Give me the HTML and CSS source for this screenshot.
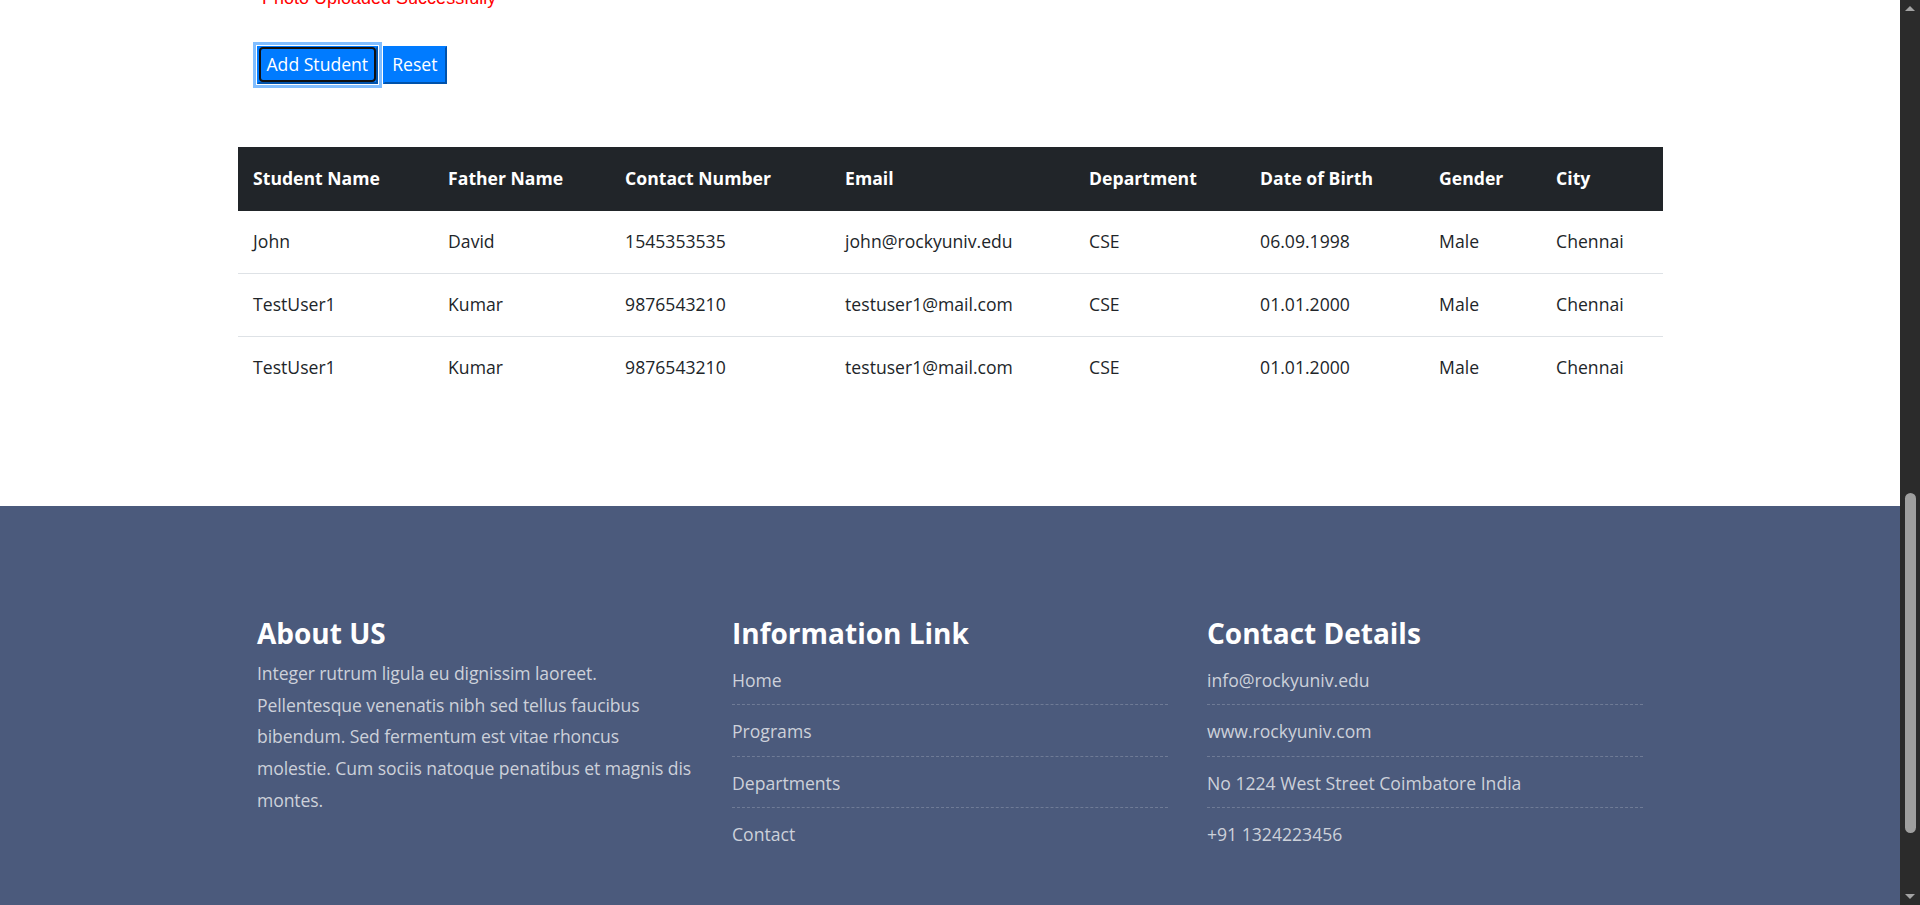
FILE: index.html
```html
<!DOCTYPE html>
<html lang="en">
<head>
<meta charset="utf-8">
<title>Rocky University - Student Registration</title>
<link rel="stylesheet" href="styles.css">
</head>
<body>
<div class="page">
  <main class="main">
    <div class="container">
      <form class="reg-form" onsubmit="return false;">
        <p class="upload-msg">&nbsp;Photo Uploaded Successfully</p>
        <div class="actions">
          <button type="submit" class="btn btn-focus">Add Student</button>
          <button type="reset" class="btn">Reset</button>
        </div>
      </form>

      <table class="students">
        <colgroup>
          <col class="c1"><col class="c2"><col class="c3"><col class="c4"><col class="c5"><col class="c6"><col class="c7"><col class="c8">
        </colgroup>
        <thead>
          <tr>
            <th>Student Name</th><th>Father Name</th><th>Contact Number</th><th>Email</th><th>Department</th><th>Date of Birth</th><th>Gender</th><th>City</th>
          </tr>
        </thead>
        <tbody>
          <tr>
            <td>John</td><td>David</td><td>1545353535</td><td>john@rockyuniv.edu</td><td>CSE</td><td>06.09.1998</td><td>Male</td><td>Chennai</td>
          </tr>
          <tr>
            <td>TestUser1</td><td>Kumar</td><td>9876543210</td><td>testuser1@mail.com</td><td>CSE</td><td>01.01.2000</td><td>Male</td><td>Chennai</td>
          </tr>
          <tr>
            <td>TestUser1</td><td>Kumar</td><td>9876543210</td><td>testuser1@mail.com</td><td>CSE</td><td>01.01.2000</td><td>Male</td><td>Chennai</td>
          </tr>
        </tbody>
      </table>
    </div>
  </main>

  <footer class="site-footer">
    <div class="container footer-grid">
      <div class="footer-col">
        <h3 class="footer-title">About US</h3>
        <p class="footer-text">Integer rutrum ligula eu dignissim laoreet. Pellentesque venenatis nibh sed tellus faucibus bibendum. Sed fermentum est vitae rhoncus molestie. Cum sociis natoque penatibus et magnis dis montes.</p>
      </div>
      <div class="footer-col">
        <h3 class="footer-title">Information Link</h3>
        <ul class="footer-list">
          <li><a href="#">Home</a></li>
          <li><a href="#">Programs</a></li>
          <li><a href="#">Departments</a></li>
          <li><a href="#">Contact</a></li>
        </ul>
      </div>
      <div class="footer-col">
        <h3 class="footer-title">Contact Details</h3>
        <ul class="footer-list">
          <li>info@rockyuniv.edu</li>
          <li>www.rockyuniv.com</li>
          <li>No 1224 West Street Coimbatore India</li>
          <li>+91 1324223456</li>
        </ul>
      </div>
    </div>
  </footer>
</div>

<div class="scrollbar" aria-hidden="true">
  <span class="sb-btn"><span class="sb-arrow sb-up"></span></span>
  <span class="sb-thumb"></span>
  <span class="sb-btn"><span class="sb-arrow sb-down"></span></span>
</div>
</body>
</html>
```

FILE: styles.css
```css
html {
  background: #fff;
  overflow: hidden;
}

body {
  margin: 0;
  background: #fff;
  font-family: "Open Sans", "Noto Sans", Arial, sans-serif;
  font-size: 17.6px;
  line-height: 1.5;
  color: #212529;
}

.page {
  padding-right: 20px;
}

.container {
  width: 1425px;
  margin: 0 auto;
  box-sizing: border-box;
}

/* main */
.main {
  padding: 0 0 106.4px;
}

.reg-form {
  padding: 0 19.5px;
}

.upload-msg {
  margin: -11.7px 0 38px;
  font-family: "Liberation Sans", Arial, sans-serif;
  font-size: 18px;
  line-height: 20px;
  color: #ff0000;
}

.actions {
  display: flex;
  gap: 5px;
  margin-bottom: 63px;
}

.btn {
  position: relative;
  font: inherit;
  line-height: 22px;
  color: #fff;
  background: #007bff;
  border: 2px outset #007bff;
  border-radius: 0;
  padding: 5px 7.5px 7px;
  cursor: pointer;
}

.btn-focus {
  box-shadow: 0 0 0 1px #fff, 0 0 0 4px #80bdff;
}

.btn-focus::after {
  content: "";
  position: absolute;
  inset: -1px 0 0 0;
  border: 2px solid #101010;
  border-radius: 4px;
}

/* table */
.students {
  width: 100%;
  border-collapse: collapse;
  table-layout: fixed;
}

.c1 { width: 195px; }
.c2 { width: 177px; }
.c3 { width: 220px; }
.c4 { width: 244px; }
.c5 { width: 171px; }
.c6 { width: 179px; }
.c7 { width: 117px; }
.c8 { width: 122px; }

.students th {
  background: #212529;
  color: #fff;
  font-weight: 700;
  text-align: left;
  line-height: 26.4px;
  padding: 17.5px 15.6px 20px;
}

.students td {
  line-height: 26.4px;
  padding: 17.2px 15.6px 18.4px;
  border-top: 1px solid #dee2e6;
}

.students tbody tr:first-child td {
  border-top: 0;
}

/* footer */
.site-footer {
  background: #4b5a7c;
  padding: 111px 0 46.4px;
}

.footer-grid {
  display: grid;
  grid-template-columns: repeat(3, 1fr);
}

.footer-col {
  padding: 0 19.5px;
  min-width: 0;
}

.footer-title {
  margin: 0 0 3.8px;
  font-size: 28px;
  line-height: 33.6px;
  font-weight: 700;
  color: #fff;
}

.footer-text {
  margin: 7.8px 0 0;
  line-height: 31.7px;
  letter-spacing: -0.1px;
  color: #cdd1da;
}

.footer-list {
  list-style: none;
  margin: 0;
  padding: 0;
  color: #cdd1da;
}

.footer-list li {
  padding: 13px 0 11px;
  line-height: 26.4px;
  border-bottom: 1px dashed rgba(255, 255, 255, 0.2);
}

.footer-list li:last-child {
  border-bottom: 0;
}

.footer-list a {
  color: #cdd1da;
  text-decoration: none;
}

/* window scrollbar (drawn over the right edge) */
.scrollbar {
  position: fixed;
  top: 0;
  right: 0;
  bottom: 0;
  width: 20px;
  background: #2b2b2b;
  display: flex;
  flex-direction: column;
  align-items: center;
}

.sb-btn {
  height: 17px;
  width: 20px;
  display: flex;
  align-items: center;
  justify-content: center;
}

.sb-arrow {
  width: 0;
  height: 0;
  border-left: 5px solid transparent;
  border-right: 5px solid transparent;
}

.sb-up {
  border-bottom: 5px solid #a3a3a3;
}

.sb-down {
  border-top: 5px solid #a3a3a3;
}

.sb-thumb {
  width: 11px;
  height: 340px;
  margin-top: auto;
  margin-bottom: 55px;
  border-radius: 6px;
  background: #9f9f9f;
}
```
